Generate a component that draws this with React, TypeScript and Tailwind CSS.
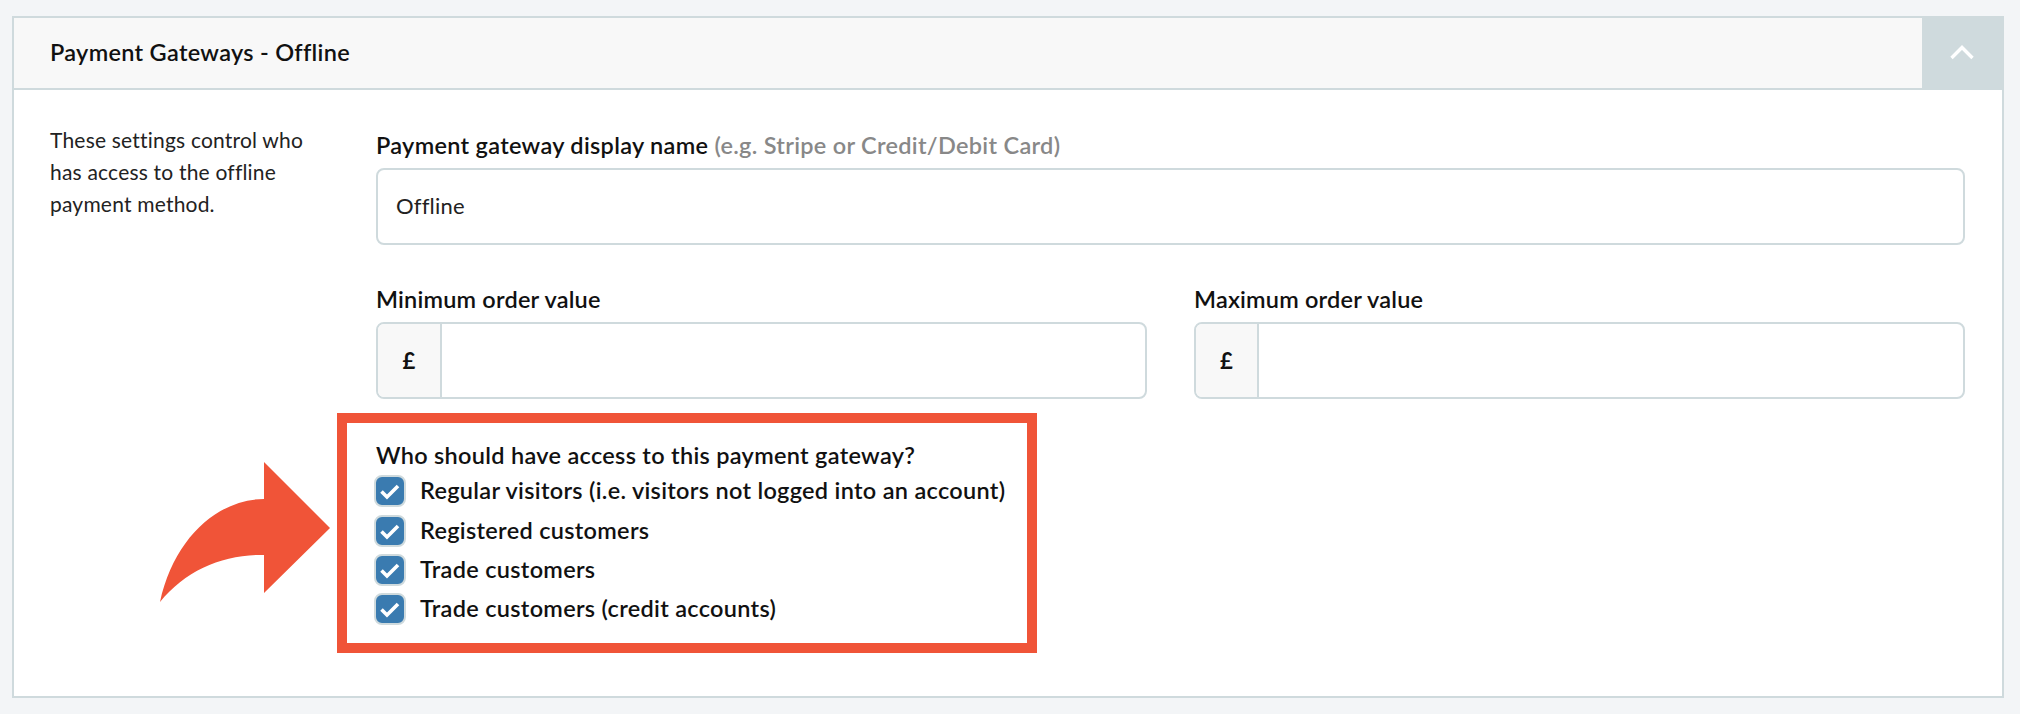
import React from 'react';

const options = [
  { label: 'Regular visitors (i.e. visitors not logged into an account)', className: 'h-[40px]' },
  { label: 'Registered customers', className: 'h-[39px]' },
  { label: 'Trade customers', className: 'h-[39px]' },
  { label: 'Trade customers (credit accounts)', className: 'h-[39px]' },
];

const CheckedBox: React.FC = () => (
  <span className="flex h-[32px] w-[32px] shrink-0 items-center justify-center rounded-[8px] border-[2px] border-[#cfdadd] bg-[#3a7bb0]">
    <svg width="20" height="20" viewBox="0 0 20 20" fill="none">
      <path d="M1.5 10.5 L7 16 L18 5" stroke="#ffffff" strokeWidth="3.6" />
    </svg>
  </span>
);

const MoneyInput: React.FC<{ label: string; prefixWidth: string }> = ({ label, prefixWidth }) => (
  <div className="flex-1">
    <label className="block h-[30px] text-[23.5px] leading-[30px] font-semibold tracking-[0.2px] text-[#111]">{label}</label>
    <div className="mt-[8px] flex h-[77px] overflow-hidden rounded-[8px] border-[2px] border-[#cfdadd] bg-white">
      <span className={`flex items-center justify-center border-r-[2px] border-[#cfdadd] bg-[#f8f8f8] text-[22px] font-bold text-[#111] ${prefixWidth}`}>£</span>
    </div>
  </div>
);

export default function App() {
  return (
    <div className="h-[714px] bg-[#f3f5f7] pt-[16px] pl-[12px] pr-[16px] font-['Lato',sans-serif]">
      <div className="h-[682px] border-[2px] border-[#cfdadd] bg-white">
        <div className="flex h-[72px] border-b-[2px] border-[#cfdadd] bg-[#f8f8f8]">
          <h2 className="flex flex-1 items-center pl-[36px] text-[23.5px] font-semibold tracking-[0.3px] text-[#111]">Payment Gateways - Offline</h2>
          <div className="-mt-[2px] flex w-[80px] items-center justify-center bg-[#cfdadd]">
            <svg width="24" height="16" viewBox="0 0 24 16" fill="none">
              <path d="M1.5 14 L12 3.5 L22.5 14" stroke="#ffffff" strokeWidth="3.4" />
            </svg>
          </div>
        </div>
        <div className="relative flex pl-[36px] pr-[37px]">
          <p className="w-[326px] shrink-0 pt-[34px] text-[21px] leading-[32px] tracking-[0.2px] text-[#222]">
            These settings control who
            <br />has access to the offline
            <br />payment method.
          </p>
          <div className="flex-1 pt-[40px]">
            <label className="block h-[30px] text-[23.5px] leading-[30px] font-semibold tracking-[0.3px] text-[#111]">
              Payment gateway display name <span className="text-[#888]">(e.g. Stripe or Credit/Debit Card)</span>
            </label>
            <div className="mt-[8px] flex h-[77px] items-center rounded-[8px] border-[2px] border-[#cfdadd] px-[18px] pb-[2px] text-[22px] tracking-[0.2px] text-[#222]">Offline</div>
            <div className="mt-[39px] flex gap-[47px]">
              <MoneyInput label="Minimum order value" prefixWidth="w-[64px]" />
              <MoneyInput label="Maximum order value" prefixWidth="w-[63px]" />
            </div>
            <div className="mt-[14px] -ml-[39px] h-[240px] w-[700px] border-[10px] border-[#f05438] pl-[29px] pt-[17px]">
              <div className="h-[31px] text-[23.5px] leading-[30px] font-semibold tracking-[0.3px] text-[#111]">Who should have access to this payment gateway?</div>
              {options.map((o) => (
                <div key={o.label} className={`-ml-[2px] flex items-center gap-[14px] ${o.className}`}>
                  <CheckedBox />
                  <span className="text-[23.5px] font-semibold tracking-[0.3px] text-[#111]">{o.label}</span>
                </div>
              ))}
            </div>
          </div>
          <svg className="absolute left-[144px] top-[372px]" width="172" height="144" viewBox="0 0 172 144" fill="#f05438">
            <path d="M2 140 C16 76 60 37 106 37 L106 0 L172 66 L106 131 L106 93 C66 92 28 108 2 140 Z" />
          </svg>
        </div>
      </div>
    </div>
  );
}
